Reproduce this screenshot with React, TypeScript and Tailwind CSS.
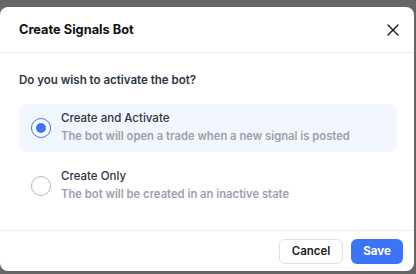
import { X } from "lucide-react";

const options = [
  {
    id: "activate",
    title: "Create and Activate",
    desc: "The bot will open a trade when a new signal is posted",
    selected: true,
  },
  {
    id: "create",
    title: "Create Only",
    desc: "The bot will be created in an inactive state",
    selected: false,
  },
];

export default function App() {
  return (
    <div className="h-[274px] w-[416px] bg-[#666666] pt-[7px] overflow-hidden font-['Inter','Liberation_Sans',sans-serif]">
      <div className="w-[414px] h-[264px] bg-white rounded-[8px] flex flex-col">
        {/* Header */}
        <div className="h-[46px] flex items-center justify-between pl-[19px] pr-[11px] border-b border-[#eceef1]">
          <h2 className="text-[12.8px] font-bold text-[#111111]">Create Signals Bot</h2>
          <X size={20} strokeWidth={1.6} className="text-[#1a1a1a]" />
        </div>

        {/* Body */}
        <div className="flex-1 px-[19px] pt-[19px]">
          <p className="text-[11.5px] font-semibold text-[#2b3445] leading-[16px]">Do you wish to activate the bot?</p>
          <div className="mt-[16px] flex flex-col gap-[10px] w-[378px]">
            {options.map((o) => (
              <div
                key={o.id}
                className={`flex items-center gap-[10px] rounded-[8px] pl-[12px] h-[48px] ${o.selected ? "bg-[#f2f6fe]" : ""}`}
              >
                {o.selected ? (
                  <span className="w-[20px] h-[20px] rounded-full border-[1.5px] border-[#3b74f6] flex items-center justify-center bg-white">
                    <span className="w-[10px] h-[10px] rounded-full bg-[#3b74f6]" />
                  </span>
                ) : (
                  <span className="w-[20px] h-[20px] rounded-full border border-[#b5b9c0] bg-white" />
                )}
                <div className="flex flex-col gap-[1px] -mt-[2px]">
                  <span className="text-[11.5px] font-medium text-[#2b3445] leading-[17px]">{o.title}</span>
                  <span className="text-[11.25px] font-semibold text-[#9aa1ad] leading-[17px]">{o.desc}</span>
                </div>
              </div>
            ))}
          </div>
        </div>

        {/* Footer */}
        <div className="h-[41px] border-t border-[#eceef1] flex items-start justify-end gap-[8px] pr-[11px] pt-[8px]">
          <button className="h-[25px] w-[64px] rounded-[6px] border border-[#dcdfe4] bg-white text-[11.5px] font-semibold text-[#1a1a1a]">
            Cancel
          </button>
          <button className="h-[25px] w-[52px] rounded-[6px] bg-[#3b74f6] text-[11.5px] font-bold text-white">
            Save
          </button>
        </div>
      </div>
    </div>
  );
}
